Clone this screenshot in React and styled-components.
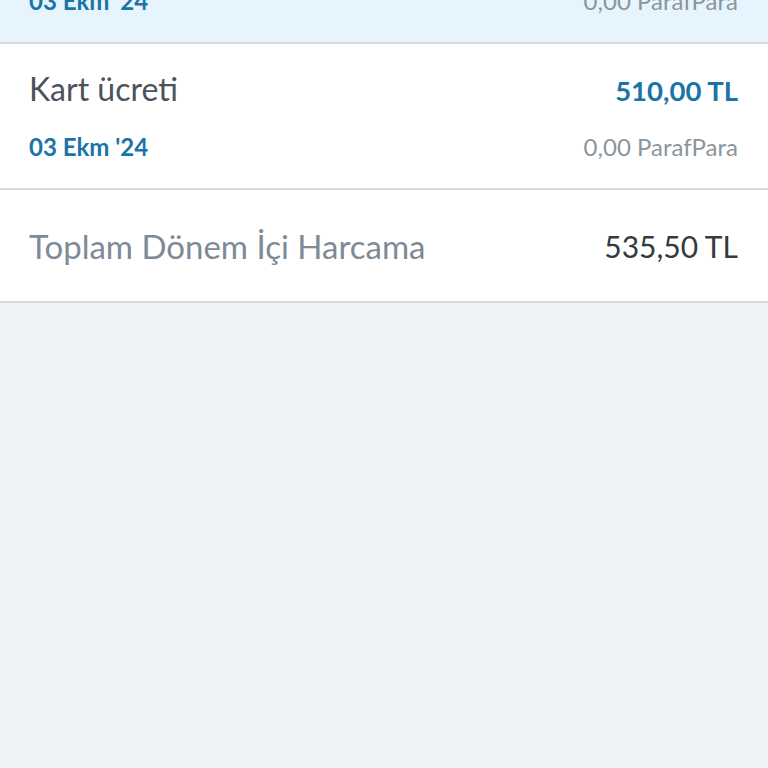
import styled, { createGlobalStyle } from "styled-components";

const GlobalStyle = createGlobalStyle`
  html, body {
    margin: 0;
    padding: 0;
    background: #eef2f4;
    font-family: Lato, "Open Sans", sans-serif;
  }
`;

const transactions = [
  { id: 1, title: "Hesap işletim ücreti", amount: "25,50 TL", date: "03 Ekm '24", points: "0,00 ParafPara", active: true },
  { id: 2, title: "Kart ücreti", amount: "510,00 TL", date: "03 Ekm '24", points: "0,00 ParafPara" },
];

const App = () => {
  return (
    <>
      <GlobalStyle />
      <Page>
        <List>
          {transactions.map((item) => (
            <Row key={item.id} $active={item.active}>
              <Line>
                <Title>{item.title}</Title>
                <Amount>{item.amount}</Amount>
              </Line>
              <Line>
                <DateText>{item.date}</DateText>
                <Points>{item.points}</Points>
              </Line>
            </Row>
          ))}
        </List>
        <Total>
          <TotalLabel>Toplam Dönem İçi Harcama</TotalLabel>
          <TotalValue>535,50 TL</TotalValue>
        </Total>
      </Page>
    </>
  );
};

export default App;

const Page = styled.div`
  margin-top: -102px;
`;

const List = styled.div`
  display: flex;
  flex-direction: column;
`;

const Row = styled.div`
  display: flex;
  flex-direction: column;
  justify-content: center;
  gap: 24px;
  padding: 0 30px 0 29px;
  height: 146px;
  box-sizing: border-box;
  background: ${(p) => (p.$active ? "#e5f4fd" : "#ffffff")};
  border-bottom: 2px solid #d6d9dc;
`;

const Line = styled.div`
  display: flex;
  justify-content: space-between;
  align-items: baseline;
  line-height: 1.2;
`;

const Title = styled.span`
  font-size: 32px;
  color: #4a535b;
`;

const Amount = styled.span`
  font-size: 27.5px;
  font-weight: 700;
  color: #1a74a8;
`;

const DateText = styled.span`
  font-size: 24px;
  font-weight: 700;
  color: #1a74a8;
`;

const Points = styled.span`
  font-size: 24px;
  color: #8b959d;
`;

const Total = styled.div`
  display: flex;
  justify-content: space-between;
  align-items: center;
  height: 113px;
  box-sizing: border-box;
  padding: 0 30px 0 29px;
  background: #ffffff;
  border-bottom: 2px solid #d6d9dc;
`;

const TotalLabel = styled.span`
  font-size: 33px;
  color: #7e8a96;
`;

const TotalValue = styled.span`
  font-size: 30px;
  color: #333a40;
`;
